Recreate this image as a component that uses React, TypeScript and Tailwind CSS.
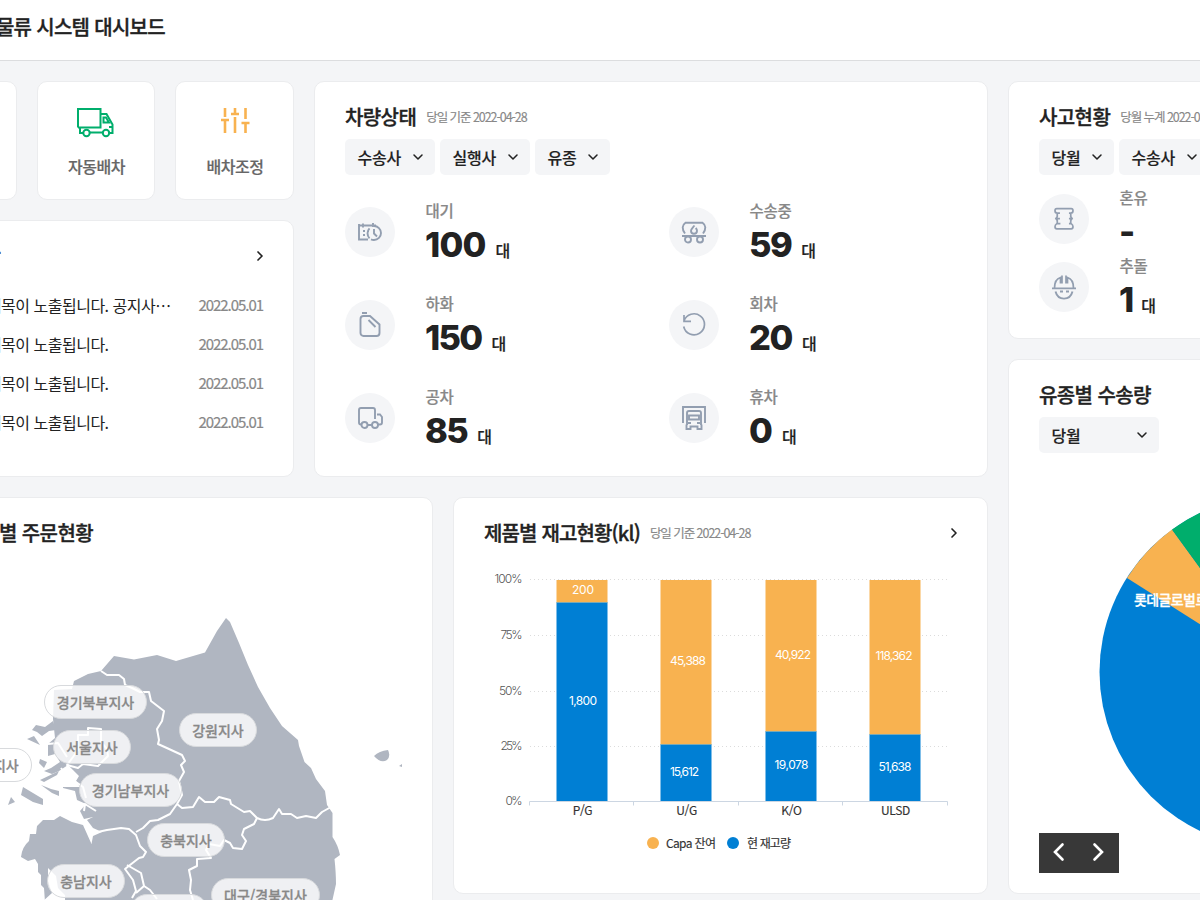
import React from "react";
import { ChevronDown, ChevronRight } from "lucide-react";

const card = "box-border rounded-[10px] border border-[#ebecee] bg-white";

function CardTitle({ children, note, more, tracking = "tracking-[-0.6px]" }: { children: React.ReactNode; note?: string; more?: boolean; tracking?: string }) {
  return (
    <div className="flex h-7 items-center">
      <h2 className={`text-[20px] leading-7 font-medium whitespace-nowrap [-webkit-text-stroke:0.35px] ${tracking}`}>{children}</h2>
      {note && <span className="ml-[10px] text-[12.500px] tracking-[-1.05px] whitespace-nowrap text-[#888] [-webkit-text-stroke:0.15px]">{note}</span>}
      {more && <ChevronRight className="-mr-[4px] ml-auto" size={16} strokeWidth={2.5} />}
    </div>
  );
}

function Select({ label, width }: { label: string; width: string }) {
  return (
    <button className={`flex h-9 items-center justify-between rounded-[5px] bg-[#f4f5f7] pr-[9px] pl-[13px] text-[16px] font-medium tracking-[-0.2px] ${width}`}>
      <span className="-ml-[0.500px] pb-px [-webkit-text-stroke:0.15px]">{label}</span>
      <ChevronDown size={16} strokeWidth={2.3} />
    </button>
  );
}

function Stat({ label, value, unit, icon, tracking = "tracking-[-1px]" }: { label: string; value: string; unit?: string; icon: React.ReactNode; tracking?: string }) {
  return (
    <div className="flex h-[66px] items-center">
      <div className="flex size-[50px] items-center justify-center rounded-full bg-[#f4f5f7]">
        <svg width="26" height="26" viewBox="0 0 26 26" fill="none" stroke="#929eb0" strokeWidth="1.9">{icon}</svg>
      </div>
      <div className="ml-[30px]">
        <div className="h-6 pl-[0.500px] text-[15.500px] leading-[22px] font-medium tracking-[-0.3px] text-[#888] [-webkit-text-stroke:0.2px]">{label}</div>
        <div className="flex h-[42px] items-baseline">
          <span className={`font-[Inter] text-[34.500px] leading-[43px] font-extrabold ${tracking}`}>{value}</span>
          {unit && <span className="ml-[10px] text-[16px] leading-[20px] font-medium [-webkit-text-stroke:0.2px]">{unit}</span>}
        </div>
      </div>
    </div>
  );
}

const icons = {
  wait: (
    <>
      <path d="M11 20.500H2V5M2 6.500h3M7 6.500h8M17 6.500h2M6 4.500v4M16 4v4M6 12h2M6 16h2M11 12h1" />
      <path d="M12.500 9.300a7.300 7.300 0 0 0 0 10M17 7a7 7 0 1 1 0 14 7 7 0 0 1-3-.6M17 10v4.500l3 3" />
    </>
  ),
  unload: <path d="M5 1h5M6.500 4H13l9.500 8.500V21a3 3 0 0 1-3 3h-13a3 3 0 0 1-3-3V7a3 3 0 0 1 3-3ZM11.500 8l7 7" />,
  empty: (
    <>
      <path d="M5 19.500H4a2 2 0 0 1-2-2V5a2 2 0 0 1 2-2h12a2 2 0 0 1 2 2v9M10.500 20h5M20 9.500h3l2 2.500v5.500a2 2 0 0 1-2 2h-2" />
      <circle cx="7.500" cy="20" r="3" /><circle cx="18" cy="20" r="3" />
    </>
  ),
  moving: (
    <>
      <path d="M4 14.500C.7 10 1 6 4.500 3.700h17C25 6 25.300 10 22 14.500M1 17h24" />
      <path d="M13.500 6.500c-2 2.500-3.500 3.500-3.500 5.200a3 3 0 0 0 6 0c0-1-.5-1.800-1.300-2.700" />
      <circle cx="7" cy="20.500" r="3" /><circle cx="19" cy="20.500" r="3" />
    </>
  ),
  back: <path d="M3 3v6.300h7M3 9a10.500 10.500 0 1 1-.3 5.500" strokeWidth="1.7" />,
  rest: (
    <>
      <path d="M2 18V2h22v16M6 20V8a2 2 0 0 1 2-2h10a2 2 0 0 1 2 2v12M8 10.500h10v4H8ZM7 18h3M16 18h3" />
      <path d="M5.500 19.500v4.500h4v-2.500h7V24h4v-4.500" />
    </>
  ),
  mixed: (
    <path transform="translate(1.300 0.600) scale(0.900 0.920)" d="M8.500 7H5.500C3.500 7 3 6 3 4.500 3 3 3.500 2.300 5 2.300h16c1.500 0 2 .7 2 2.200S22.500 7 20.500 7h-2M5.500 7v4L4 13l1.500 2v3.500h3.500M5 18.500c-1.500 1-2 2-2 3.500 0 1.500.7 2.200 2 2.200h16c1.300 0 2-.7 2-2.200 0-1.500-.5-2.500-2-3.500h-2.500M20.500 7v4l1.500 2-1.500 2v3.500M5 13h3.500M18.500 13h3" />
  ),
  crash: (
    <>
      <path d="M1 14.300h24M3.500 14C3.500 7 6 4.500 9.500 3.500v6M22.500 14c0-7-2.500-9.500-6-10.500v6M11 1.500v8M15 1.500v8" strokeWidth="1.700" />
      <path d="M4.500 17.500C7 27 19 27 21.500 17.500M9 17.500h3M15 17.500h3" />
    </>
  ),
};

function TruckIcon() {
  return (
    <svg className="-ml-[3px]" width="40" height="32" viewBox="0 0 40 32" fill="none" stroke="#00ae6c" strokeWidth="2">
      <path d="M3 20.500V2h22.500v18.500H3M5 21v5h4M25.500 7h6l6 10.500V26h-4M14.500 25.500H28M37 20h-3" />
      <path d="M28.500 10.500h2.500l3 5h-5.500Z" /><circle cx="11.500" cy="26" r="3.200" /><circle cx="31" cy="26" r="3.200" />
    </svg>
  );
}

function SlidersIcon() {
  return (
    <svg width="30" height="26" viewBox="0 0 30 26" fill="none" stroke="#f8b250" strokeWidth="2.600">
      <path d="M5 0v9M1 12h8M5 12v13M15 0v6M11 6h8M15 9v16M25.500 0v11M21.500 15h8M25.500 15v10" />
    </svg>
  );
}

const bars = [
  { x: 556.5, split: 602.5, name: "P/G", top: "200", topX: 583, topY: 594, topW: 22, low: "1,800", lowX: 583, lowY: 705, lowW: 28 },
  { x: 660.5, split: 744.5, name: "U/G", top: "45,388", topX: 688, topY: 665, topW: 36, low: "15,612", lowX: 684.5, lowY: 776, lowW: 29 },
  { x: 765.5, split: 731.5, name: "K/O", top: "40,922", topX: 793, topY: 659, topW: 36, low: "19,078", lowX: 791.5, lowY: 769, lowW: 34 },
  { x: 869.5, split: 734.5, name: "ULSD", top: "118,362", topX: 894, topY: 660, topW: 37, low: "51,638", lowX: 895, lowY: 771, lowW: 33 },
];
const ticks = [
  { label: "100%", y: 579.5, w: 28 },
  { label: "75%", y: 635.5, w: 22 },
  { label: "50%", y: 691.5, w: 23.5 },
  { label: "25%", y: 746.5, w: 22 },
  { label: "0%", y: 801.5, w: 17 },
];

function StockChart() {
  return (
    <svg className="mt-[13px] block" width="474" height="300" viewBox="484 560 474 300">
      {ticks.map((t) => (
        <g key={t.label}>
          {t.y < 800 && <path d={`M530 ${t.y}H948`} stroke="#dcdcdc" strokeDasharray="1 3" />}
          <text x="522.500" y={t.y + 3} textAnchor="end" textLength={t.w} fontSize="12" fontWeight="300" fontFamily="Inter" fill="#555">{t.label}</text>
        </g>
      ))}
      <path d="M529.500 805.500V801.500H947.500V805.500M633.500 801v4.500M738.500 801v4.500M842.500 801v4.500" fill="none" stroke="#ccd6e2" />
      {bars.map((b) => (
        <g key={b.name} fontSize="12" textAnchor="middle">
          <rect x={b.x} y="580" width="51" height={b.split - 580} fill="#f8b250" />
          <rect x={b.x} y={b.split} width="51" height={801 - b.split} fill="#007fd4" />
          <path d={`M${b.x} ${b.split}h51`} stroke="#7aa9b5" />
          <g fill="#fff" fontFamily="Inter">
            <text x={b.topX} y={b.topY} textLength={b.topW}>{b.top}</text>
            <text x={b.lowX} y={b.lowY} textLength={b.lowW}>{b.low}</text>
          </g>
          <text x={b.x + 26} y="815" fill="#333" stroke="#333" strokeWidth="0.15" letterSpacing="-0.300">{b.name}</text>
        </g>
      ))}
      <circle cx="653" cy="843" r="6" fill="#f8b250" />
      <circle cx="733" cy="843" r="6" fill="#007fd4" />
      <g fontSize="12" fill="#333" stroke="#333" strokeWidth="0.15">
        <text x="666" y="848" textLength="50">Capa 잔여</text>
        <text x="747" y="848" textLength="44">현 재고량</text>
      </g>
    </svg>
  );
}

const regions = [
  { name: "경기북부지사", pos: "left-[115px] top-[125px] w-[103px]" },
  { name: "서울지사", pos: "left-[124px] top-[170px] w-[78px]" },
  { name: "인천지사", pos: "left-[25px] top-[188px] w-[78px]" },
  { name: "강원지사", pos: "left-[250px] top-[153px] w-[78px]" },
  { name: "경기남부지사", pos: "left-[150px] top-[213px] w-[103px]" },
  { name: "충북지사", pos: "left-[218px] top-[263px] w-[78px]" },
  { name: "충남지사", pos: "left-[118px] top-[304px] w-[78px]" },
  { name: "대구/경북지사", pos: "left-[282px] top-[318px] w-[109px]" },
  { name: "대전지사", pos: "left-[201px] top-[334px] w-[78px]" },
];

function RegionMap() {
  return (
    <div className="relative mt-[13px] h-[380px] overflow-hidden">
      <svg className="block" width="474" height="380" viewBox="-71 560 474 380">
        <g fill="#b0b6c1">
          <path d="M101 671 114 656 134 659.500 157 655 176 661 205 652.500 217 631 226 618 230 622 239 643 248 665 258 687 270 708 282 726 298 740 299 746 304.500 762 311 768 316 779 325 791 327 805 332.500 813V837Q338 845 340 855L334.500 859Q336 873 336 884L332 902 330 940H50L45 902 44 888 41 885 41 875 38 872V864L35 859 28 861 21 857Q22 847 29 841L30 834H36L37 826 43 820H54L60 816 72 822 83 825 91.500 844 93 836 102 832 93 828 87 820 93 817 84 819 80 811 86 804 77 800 75 791 63 788V787L80 787 76 781 79 776 73 770 68 765 59 771 52 774 44 771 51 768 60 762 55 754 48 756 48 744 55 738 53 719 54 690 72 689 74 681 88 674Z" />
          <path d="M53 721 45 727 36 725 32 730 37 732 42 736 49 731 56 730ZM27 739 34 736 40 745ZM40 759 47 762 44 768 39 763ZM23 787 43 799V805L33 802 21 795ZM8 805 11 797 15 802ZM41 785 51 789 59 791V796L52 793ZM40 780 59 771 57 775 44 782Z" />
          <path d="M374 756Q379 751 388 750 391 756 387 760 381 764 374 756ZM399 766 402 764V767Z" />
        </g>
        <g fill="none" stroke="#fff" strokeWidth="2" strokeLinejoin="round">
          <path d="M101 671 107 675 119 675 124 679 125 685 132 688 140 692 149 692 151 701 164 711 162 721 157 729 159 740 158 744 169 749 182 755 185 761 181 765 184 772 179 781 182 795 177 804 170 814 158 820 150 821 143 828 136 832" />
          <path d="M93 833 107 830 121 828 129 829 136 835 140 846 146 852 143 857 139 858 130 865 125 869 133 880 136 891 132 898" />
          <path d="M127 865 141 873 144 886 150 890 157 899M144 886 136 893" />
          <path d="M177 804 182 808 193 807 199 797 205 802H214L219 797 230 800 231 804 244 812 250 811 257 818Q265 822 273 818L279 809 282 814 291 814 297 818 306 816 316 818 322 812 331 807" />
          <path d="M257 818 254 824 244 829 242 835 246 841 242 849 233 848 230 843 224 840 220 846 209 844 206 850 211 858 197 859 197 866 189 870 191 880 190 890 193 900" />
          <path d="M78 750V735L88 735V728L101 729V742L107 749 108 756 98 766 83 764 78 768 67 765 73 757ZM48 744 58 743 67 757" />
          <path d="M61 768 66 775 83 787 86 798" /><path d="M84 811 85 804 96 811" />
        </g>
        <path d="M48 868 56 876 58 888 65 895V902H42L52 893 48 881Z" fill="#fff" />
      </svg>
      {regions.map((r) => (
        <div key={r.name} className={`absolute flex h-[34px] items-center justify-center rounded-full border border-[#d8dadd] bg-white/80 text-[14px] font-medium whitespace-nowrap text-[#888] [-webkit-text-stroke:0.3px] ${r.pos}`}>
          {r.name}
        </div>
      ))}
    </div>
  );
}

function QuickCard({ label, children }: { label: string; children?: React.ReactNode }) {
  return (
    <div className={`${card} flex h-[119px] flex-col items-center`}>
      <div className="mt-[25px] flex h-[45px] items-start justify-center">{children}</div>
      <div className="pl-px text-[16px] leading-7 font-medium tracking-[-0.5px] text-[#666] [-webkit-text-stroke:0.2px]">{label}</div>
    </div>
  );
}

const notices = ["공지사항 제목이 노출됩니다. 공지사…", "공지사항 제목이 노출됩니다.", "공지사항 제목이 노출됩니다.", "공지사항 제목이 노출됩니다."];

export default function App() {
  return (
    <div lang="ko" className="h-[900px] w-[1200px] overflow-hidden bg-[#f4f5f7] font-['Noto_Sans_CJK_KR',sans-serif] text-[#222]">
      <header className="flex h-[61px] border-b border-[#dcdddf] bg-white">
        <h1 className="-ml-[76px] flex h-[53px] w-[241px] items-center justify-end text-[20px] font-medium tracking-[-0.7px] whitespace-nowrap [-webkit-text-stroke:0.35px]">통합 물류 시스템 대시보드</h1>
      </header>
      <main className="mt-5 -ml-[101px] flex w-[1644px] gap-5">
        <div className="flex w-[1089px] flex-col gap-5">
          <div className="flex h-[396px] gap-5">
            <div className="flex w-[395px] flex-col gap-5">
              <div className="grid grid-cols-[118px_118px_119px] gap-5">
                <QuickCard label="배차현황" />
                <QuickCard label="자동배차"><TruckIcon /></QuickCard>
                <QuickCard label="배차조정"><div className="mt-px"><SlidersIcon /></div></QuickCard>
              </div>
              <section className={`${card} flex-1 px-[29px] pt-[21px]`}>
                <CardTitle more>공지사항</CardTitle>
                <ul className="mt-[15px]">
                  {notices.map((n, i) => (
                    <li key={i} className="flex h-[39px] items-center justify-between">
                      <span className="-ml-[3px] text-[16px] tracking-[-0.5px] whitespace-nowrap">{n}</span>
                      <time className="pt-px pr-px text-[15px] tracking-[-1.05px] text-[#888] [-webkit-text-stroke:0.2px]">2022.05.01</time>
                    </li>
                  ))}
                </ul>
              </section>
            </div>
            <section className={`${card} w-[674px] px-[30px] pt-[21px]`}>
              <CardTitle note="당일 기준 2022-04-28">차량상태</CardTitle>
              <div className="mt-2 flex gap-[5px]">
                <Select label="수송사" width="w-[90px]" />
                <Select label="실행사" width="w-[90px]" />
                <Select label="유종" width="w-[75px]" />
              </div>
              <div className="mt-6 grid grid-cols-[324px_1fr] gap-y-[27px]">
                <Stat label="대기" value="100" unit="대" icon={icons.wait} tracking="tracking-[-0.8px]" />
                <Stat label="수송중" value="59" unit="대" icon={icons.moving} tracking="tracking-[-1.6px]" />
                <Stat label="하화" value="150" unit="대" icon={icons.unload} tracking="tracking-[-1.7px]" />
                <Stat label="회차" value="20" unit="대" icon={icons.back} tracking="tracking-[-1.4px]" />
                <Stat label="공차" value="85" unit="대" icon={icons.empty} tracking="tracking-[-1.6px]" />
                <Stat label="휴차" value="0" unit="대" icon={icons.rest} />
              </div>
            </section>
          </div>
          <div className="flex h-[397px] gap-5">
            <section className={`${card} h-[450px] w-[534px] px-[29px] pt-[21px]`}>
              <div className="flex w-[164px] justify-end"><CardTitle>지사별 주문현황</CardTitle></div>
              <RegionMap />
            </section>
            <section className={`${card} w-[535px] pt-[21px] pr-[29px] pl-[30px]`}>
              <CardTitle note="당일 기준 2022-04-28" more tracking="tracking-[-0.85px]">제품별 재고현황(kl)</CardTitle>
              <StockChart />
            </section>
          </div>
        </div>
        <div className="flex w-[535px] flex-col gap-5">
          <section className={`${card} h-[258px] px-[30px] pt-[21px]`}>
            <CardTitle note="당월 누계 2022-04-28">사고현황</CardTitle>
            <div className="mt-2 flex gap-[5px]">
              <Select label="당월" width="w-[75px]" />
              <Select label="수송사" width="w-[90px]" />
            </div>
            <div className="mt-[11px] flex flex-col gap-[2px]">
              <Stat label="혼유" value="-" icon={icons.mixed} />
              <Stat label="추돌" value="1" unit="대" icon={icons.crash} tracking="tracking-[-3px]" />
            </div>
          </section>
          <section className={`${card} flex h-[535px] flex-col px-[30px] pt-[21px]`}>
            <CardTitle>유종별 수송량</CardTitle>
            <div className="mt-2 flex"><Select label="당월" width="w-[120px]" /></div>
            <svg className="mt-[27px] block" width="474" height="353" viewBox="1039 480 474 353">
              <circle cx="1275.500" cy="672" r="176" fill="#007fd4" />
              <path d="M1275.500 672 1127 578A176 176 0 0 1 1172 529.500Z" fill="#f8b250" />
              <path d="M1275.500 672 1172 529.500A176 176 0 0 1 1275.500 496Z" fill="#00ae6c" />
              <text x="1134" y="604.500" fill="#fff" stroke="#fff" strokeWidth="0.3" fontSize="14" fontWeight="500" letterSpacing="-0.600">롯데글로벌로지스</text>
            </svg>
            <div className="flex h-10 w-20 shrink-0 items-center bg-[#383838]">
              <svg width="80" height="40" fill="none" stroke="#fff" strokeWidth="2.600"><path d="M23.500 11.500 16 19l7.500 7.500M55.500 11.500 63 19l-7.500 7.500" strokeLinecap="round" /></svg>
            </div>
          </section>
        </div>
      </main>
    </div>
  );
}
